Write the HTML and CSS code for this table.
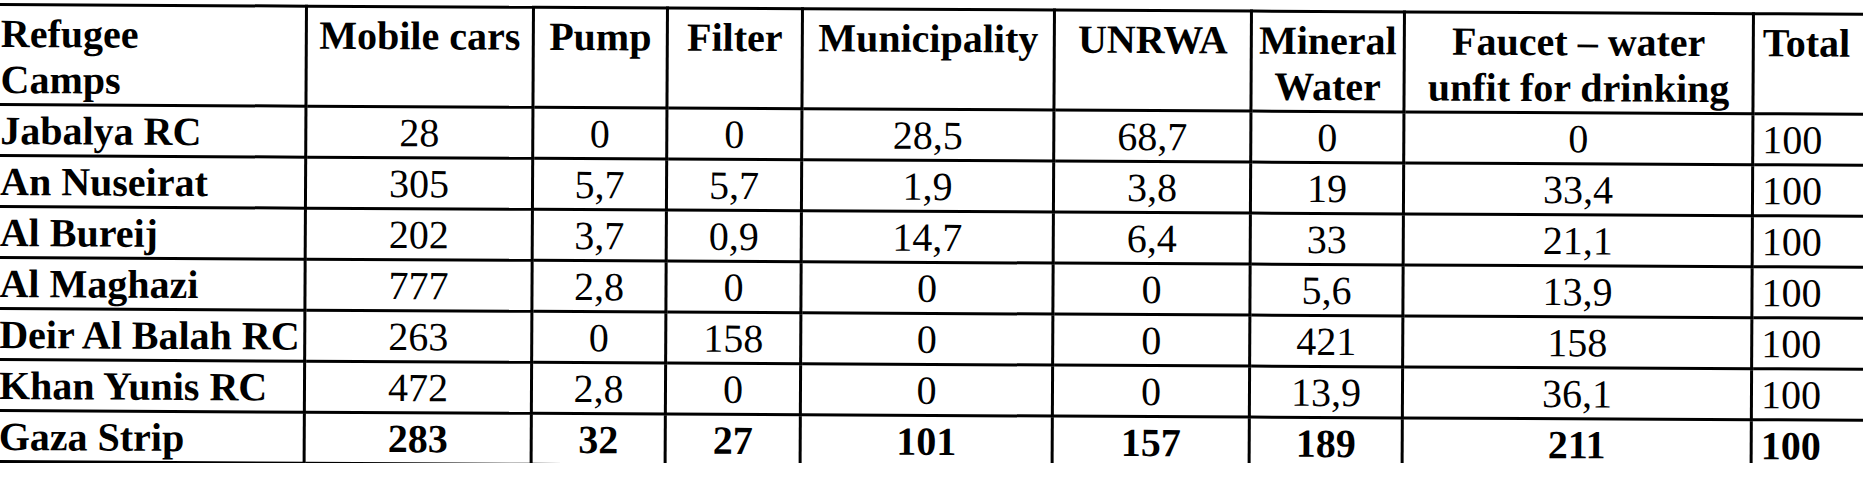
FILE: index.html
```html
<!DOCTYPE html>
<html lang="en">
<head>
  <meta charset="UTF-8" />
  <title>Water sources in refugee camps</title>
  <link rel="stylesheet" href="styles.css">
</head>
<body>
  <table class="water-table">
    <colgroup>
      <col class="c-camp">
      <col class="c-cars">
      <col class="c-pump">
      <col class="c-filter">
      <col class="c-muni">
      <col class="c-unrwa">
      <col class="c-mineral">
      <col class="c-faucet">
      <col class="c-total">
    </colgroup>
    <thead>
      <tr>
        <th class="camp">Refugee<br>Camps</th>
        <th>Mobile cars</th>
        <th>Pump</th>
        <th>Filter</th>
        <th>Municipality</th>
        <th>UNRWA</th>
        <th>Mineral<br>Water</th>
        <th>Faucet – water<br>unfit for drinking</th>
        <th class="total">Total</th>
      </tr>
    </thead>
    <tbody>
      <tr>
        <td class="camp">Jabalya RC</td>
        <td>28</td><td>0</td><td>0</td><td>28,5</td><td>68,7</td><td>0</td><td>0</td><td class="total">100</td>
      </tr>
      <tr>
        <td class="camp">An Nuseirat</td>
        <td>305</td><td>5,7</td><td>5,7</td><td>1,9</td><td>3,8</td><td>19</td><td>33,4</td><td class="total">100</td>
      </tr>
      <tr>
        <td class="camp">Al Bureij</td>
        <td>202</td><td>3,7</td><td>0,9</td><td>14,7</td><td>6,4</td><td>33</td><td>21,1</td><td class="total">100</td>
      </tr>
      <tr>
        <td class="camp">Al Maghazi</td>
        <td>777</td><td>2,8</td><td>0</td><td>0</td><td>0</td><td>5,6</td><td>13,9</td><td class="total">100</td>
      </tr>
      <tr>
        <td class="camp">Deir Al Balah RC</td>
        <td>263</td><td>0</td><td>158</td><td>0</td><td>0</td><td>421</td><td>158</td><td class="total">100</td>
      </tr>
      <tr>
        <td class="camp">Khan Yunis RC</td>
        <td>472</td><td>2,8</td><td>0</td><td>0</td><td>0</td><td>13,9</td><td>36,1</td><td class="total">100</td>
      </tr>
      <tr class="sum">
        <td class="camp">Gaza Strip</td>
        <td>283</td><td>32</td><td>27</td><td>101</td><td>157</td><td>189</td><td>211</td><td class="total">100</td>
      </tr>
    </tbody>
  </table>
</body>
</html>
```

FILE: styles.css
```css
html, body {
  margin: 0;
  padding: 0;
  background: #ffffff;
  overflow: hidden;
}
body {
  padding-top: 3px;
  font-family: "Liberation Serif", "Times New Roman", serif;
  color: #000;
}
.water-table {
  border-collapse: collapse;
  table-layout: fixed;
  width: 1888px;
  margin-left: -8px;
  font-size: 40px;
  line-height: 46px;
  transform: rotate(0.3deg);
  transform-origin: left top;
}
.c-camp { width: 313px; }
.c-cars { width: 227px; }
.c-pump { width: 134px; }
.c-filter { width: 135px; }
.c-muni { width: 252px; }
.c-unrwa { width: 197px; }
.c-mineral { width: 153px; }
.c-faucet { width: 349px; }
.c-total { width: 128px; }
th, td {
  border: 3px solid #000;
  padding: 0 2px;
  white-space: nowrap;
  overflow: hidden;
}
th {
  height: 91px;
  vertical-align: top;
  text-align: center;
  font-weight: bold;
  padding-top: 5px;
}
td {
  height: 46px;
  text-align: center;
  vertical-align: middle;
  padding-top: 2px;
}
.camp {
  text-align: left;
  font-weight: bold;
  padding-left: 6px;
}
.total {
  text-align: left;
  padding-left: 8px;
}
.sum td {
  font-weight: bold;
}
```
